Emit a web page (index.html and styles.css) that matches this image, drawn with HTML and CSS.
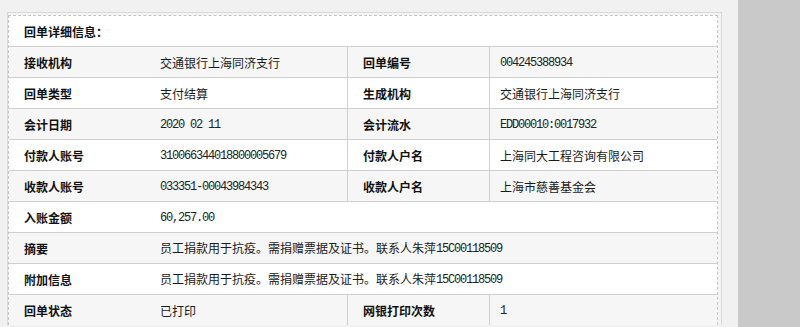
FILE: index.html
```html
<!DOCTYPE html>
<html>
	<head>
		<meta charset="utf-8">
		<title>回单详细信息</title>
		<link rel="stylesheet" href="styles.css">
	</head>
	<body>
		<div class="page">
			<!-- 回单内容区 -->
			<div class="main">
				<div class="box">
					<div class="inner">
						<table class="detail">
							<tr class="head">
								<td colspan="4">回单详细信息：</td>
							</tr>
							<tr class="odd">
								<th>接收机构</th>
								<td>交通银行上海同济支行</td>
								<th class="sep">回单编号</th>
								<td class="sep"><span class="num">004245388934</span></td>
							</tr>
							<tr>
								<th>回单类型</th>
								<td>支付结算</td>
								<th class="sep">生成机构</th>
								<td class="sep">交通银行上海同济支行</td>
							</tr>
							<tr class="odd">
								<th>会计日期</th>
								<td><span class="num">2020 02 11</span></td>
								<th class="sep">会计流水</th>
								<td class="sep"><span class="num">EDD00010:0017932</span></td>
							</tr>
							<tr>
								<th>付款人账号</th>
								<td><span class="num">310066344018800005679</span></td>
								<th class="sep">付款人户名</th>
								<td class="sep">上海同大工程咨询有限公司</td>
							</tr>
							<tr class="odd">
								<th>收款人账号</th>
								<td><span class="num">033351-00043984343</span></td>
								<th class="sep">收款人户名</th>
								<td class="sep">上海市慈善基金会</td>
							</tr>
							<tr>
								<th>入账金额</th>
								<td colspan="3"><span class="num">60,257.00</span></td>
							</tr>
							<tr class="odd">
								<th>摘要</th>
								<td colspan="3">员工捐款用于抗疫。需捐赠票据及证书。联系人朱萍<span class="num">15C00118509</span></td>
							</tr>
							<tr>
								<th>附加信息</th>
								<td colspan="3">员工捐款用于抗疫。需捐赠票据及证书。联系人朱萍<span class="num">15C00118509</span></td>
							</tr>
							<tr class="odd">
								<th>回单状态</th>
								<td>已打印</td>
								<th class="sep">网银打印次数</th>
								<td class="sep"><span class="num">1</span></td>
							</tr>
						</table>
					</div>
				</div>
			</div>
			<!-- 右侧灰色区域 -->
			<div class="side"></div>
		</div>
	</body>
</html>
```

FILE: styles.css
```css
* {
	padding: 0;
	margin: 0;
}
body {
	background-color: #f1f1f1;
	font-family: "Noto Sans CJK SC", "Liberation Sans", sans-serif;
	font-size: 12px;
	color: #1a1a1a;
	overflow: hidden;
}
.page {
	display: flex;
	height: 327px;
}
.main {
	width: 738px;
	padding: 12px 0 0 7px;
	box-sizing: border-box;
}
.side {
	flex: 1;
	background-color: #c9c9c9;
}
/* 外框 实线 */
.box {
	width: 710px;
	border: 1px solid #d9d9d9;
	border-bottom: none;
	padding: 2px 3px 0 0;
	background-color: #f4f4f4;
}
/* 内框 虚线 */
.inner {
	border: 1px dashed #c4c4c4;
	border-bottom: none;
	background-color: #ffffff;
}
.detail {
	width: 100%;
	border-collapse: collapse;
}
.detail td,
.detail th {
	height: 30px;
	border-top: 1px solid #cfcfcf;
	text-align: left;
	vertical-align: middle;
	white-space: nowrap;
	padding: 0 0 0 10px;
}
.detail th {
	font-weight: bold;
	color: #111111;
	padding-left: 15px;
}
.detail tr th:first-child {
	width: 126px;
}
.detail tr td:nth-child(2) {
	width: 187px;
}
.detail th.sep {
	width: 126px;
}
.sep {
	border-left: 1px solid #cfcfcf;
}
.detail .head td {
	height: 30px;
	border-top: none;
	font-weight: bold;
	color: #111111;
	padding-left: 15px;
}
.odd {
	background-color: #f6f6f6;
}
/* 数字用等宽字，收紧字距 */
.num {
	font-family: "Liberation Mono", "DejaVu Sans Mono", monospace;
	font-size: 12px;
	letter-spacing: -1.2px;
	color: #222222;
	position: relative;
	top: -1px;
}
```
